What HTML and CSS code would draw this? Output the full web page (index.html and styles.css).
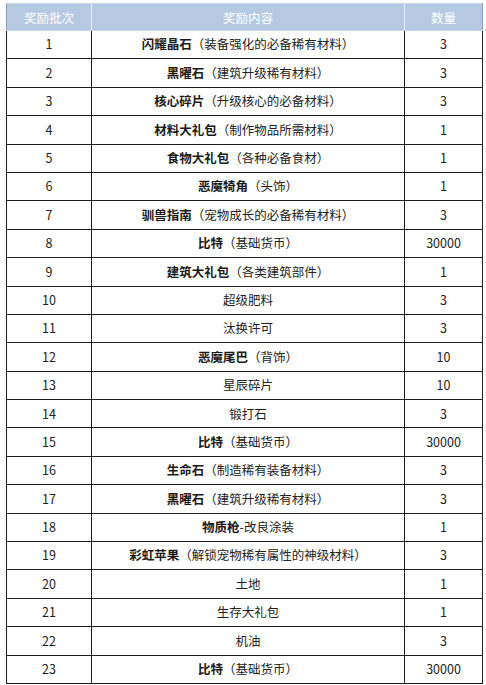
FILE: index.html
```html
<!DOCTYPE html>
<html lang="zh-CN">
<head>
<meta charset="utf-8">
<link rel="stylesheet" href="styles.css">
</head>
<body>
<table class="rewards">
  <colgroup><col class="c1"><col class="c2"><col class="c3"></colgroup>
  <thead>
    <tr><th>奖励批次</th><th>奖励内容</th><th>数量</th></tr>
  </thead>
  <tbody>
    <tr><td>1</td><td><b>闪耀晶石</b>（装备强化的必备稀有材料）</td><td>3</td></tr>
    <tr><td>2</td><td><b>黑曜石</b>（建筑升级稀有材料）</td><td>3</td></tr>
    <tr><td>3</td><td><b>核心碎片</b>（升级核心的必备材料）</td><td>3</td></tr>
    <tr><td>4</td><td><b>材料大礼包</b>（制作物品所需材料）</td><td>1</td></tr>
    <tr><td>5</td><td><b>食物大礼包</b>（各种必备食材）</td><td>1</td></tr>
    <tr><td>6</td><td><b>恶魔犄角</b>（头饰）</td><td>1</td></tr>
    <tr><td>7</td><td><b>驯兽指南</b>（宠物成长的必备稀有材料）</td><td>3</td></tr>
    <tr><td>8</td><td><b>比特</b>（基础货币）</td><td>30000</td></tr>
    <tr><td>9</td><td><b>建筑大礼包</b>（各类建筑部件）</td><td>1</td></tr>
    <tr><td>10</td><td>超级肥料</td><td>3</td></tr>
    <tr><td>11</td><td>汰换许可</td><td>3</td></tr>
    <tr><td>12</td><td><b>恶魔尾巴</b>（背饰）</td><td>10</td></tr>
    <tr><td>13</td><td>星辰碎片</td><td>10</td></tr>
    <tr><td>14</td><td>锻打石</td><td>3</td></tr>
    <tr><td>15</td><td><b>比特</b>（基础货币）</td><td>30000</td></tr>
    <tr><td>16</td><td><b>生命石</b>（制造稀有装备材料）</td><td>3</td></tr>
    <tr><td>17</td><td><b>黑曜石</b>（建筑升级稀有材料）</td><td>3</td></tr>
    <tr><td>18</td><td><b>物质枪</b>-改良涂装</td><td>1</td></tr>
    <tr><td>19</td><td><b>彩虹苹果</b>（解锁宠物稀有属性的神级材料）</td><td>3</td></tr>
    <tr><td>20</td><td>土地</td><td>1</td></tr>
    <tr><td>21</td><td>生存大礼包</td><td>1</td></tr>
    <tr><td>22</td><td>机油</td><td>3</td></tr>
    <tr><td>23</td><td><b>比特</b>（基础货币）</td><td>30000</td></tr>
  </tbody>
</table>
</body>
</html>
```
FILE: styles.css
```css
html, body {
  margin: 0;
  padding: 0;
  background: #ffffff;
}
body {
  padding: 3px 0 0 6px;
  font-family: "Noto Sans CJK SC", "Noto Sans", sans-serif;
  font-size: 12.5px;
  color: #222222;
}
.rewards {
  border-collapse: collapse;
  table-layout: fixed;
  width: 476px;
}
.c1 { width: 85px; }
.c2 { width: 313px; }
.c3 { width: 78px; }
.rewards th {
  background: #b5c9e3;
  color: #ffffff;
  font-weight: normal;
  height: 26px;
  padding: 0;
  border: 1px solid #c9d7ea;
  border-left-color: #9aaec8;
  border-right-color: #e6edf6;
}
.rewards th:first-child { border-left-color: #8f9fb5; }
.rewards th:last-child { border-right-color: #8f9fb5; }
.rewards td {
  border: 1px solid #1e1e1e;
  text-align: center;
  height: 27.4px;
  padding: 0;
  line-height: 1;
}
.rewards td b {
  font-weight: bold;
  color: #1a1a1a;
}
```
